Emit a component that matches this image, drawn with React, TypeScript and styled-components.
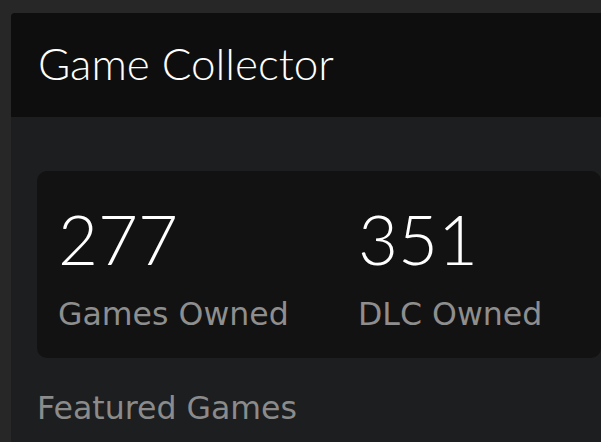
import React from "react";
import styled, { createGlobalStyle } from "styled-components";

const GlobalStyle = createGlobalStyle`
  html, body {
    margin: 0;
    padding: 0;
    background: #272727;
    font-family: "DejaVu Sans", "Liberation Sans", sans-serif;
  }
`;

const stats = [
  { value: 277, label: "Games Owned" },
  { value: 351, label: "DLC Owned" },
];

const App = () => {
  return (
    <>
      <GlobalStyle />
      <Panel>
        <Header>
          <Title>Game Collector</Title>
        </Header>
        <Content>
          <StatsCard>
            {stats.map((s) => (
              <Stat key={s.label}>
                <StatValue>{s.value}</StatValue>
                <StatLabel>{s.label}</StatLabel>
              </Stat>
            ))}
          </StatsCard>
          <SectionTitle>Featured Games</SectionTitle>
        </Content>
      </Panel>
    </>
  );
};

const Panel = styled.div`
  margin: 13px 0 0 11px;
  height: calc(100vh - 13px);
  border-top-left-radius: 4px;
  overflow: hidden;
  background: #1d1e1f;
  display: flex;
  flex-direction: column;
`;

const Header = styled.header`
  height: 104px;
  box-sizing: border-box;
  flex-shrink: 0;
  background: #0e0e0e;
  display: flex;
  align-items: center;
  padding: 0 0 4px 27px;
`;

const Title = styled.h1`
  margin: 0;
  font-family: Lato, "DejaVu Sans", sans-serif;
  font-size: 44px;
  line-height: 1;
  font-weight: 300;
  color: #ffffff;
  white-space: nowrap;
`;

const Content = styled.div`
  padding: 54px 0 0 26px;
`;

const StatsCard = styled.div`
  background: #121212;
  border-radius: 10px;
  padding: 33px 0 27px 21px;
  display: grid;
  grid-template-columns: 300px 300px;
  white-space: nowrap;
`;

const Stat = styled.div`
  display: flex;
  flex-direction: column;
  gap: 26px;
`;

const StatValue = styled.div`
  font-family: Lato, "DejaVu Sans", sans-serif;
  font-size: 69px;
  line-height: 1;
  font-weight: 300;
  color: #ffffff;
`;

const StatLabel = styled.div`
  font-size: 31.6px;
  line-height: 1;
  color: #8e8e8e;
`;

const SectionTitle = styled.h2`
  margin: 35px 0 0;
  font-size: 31.6px;
  line-height: 1;
  font-weight: 400;
  color: #8b8b8b;
  white-space: nowrap;
`;

export default App;
